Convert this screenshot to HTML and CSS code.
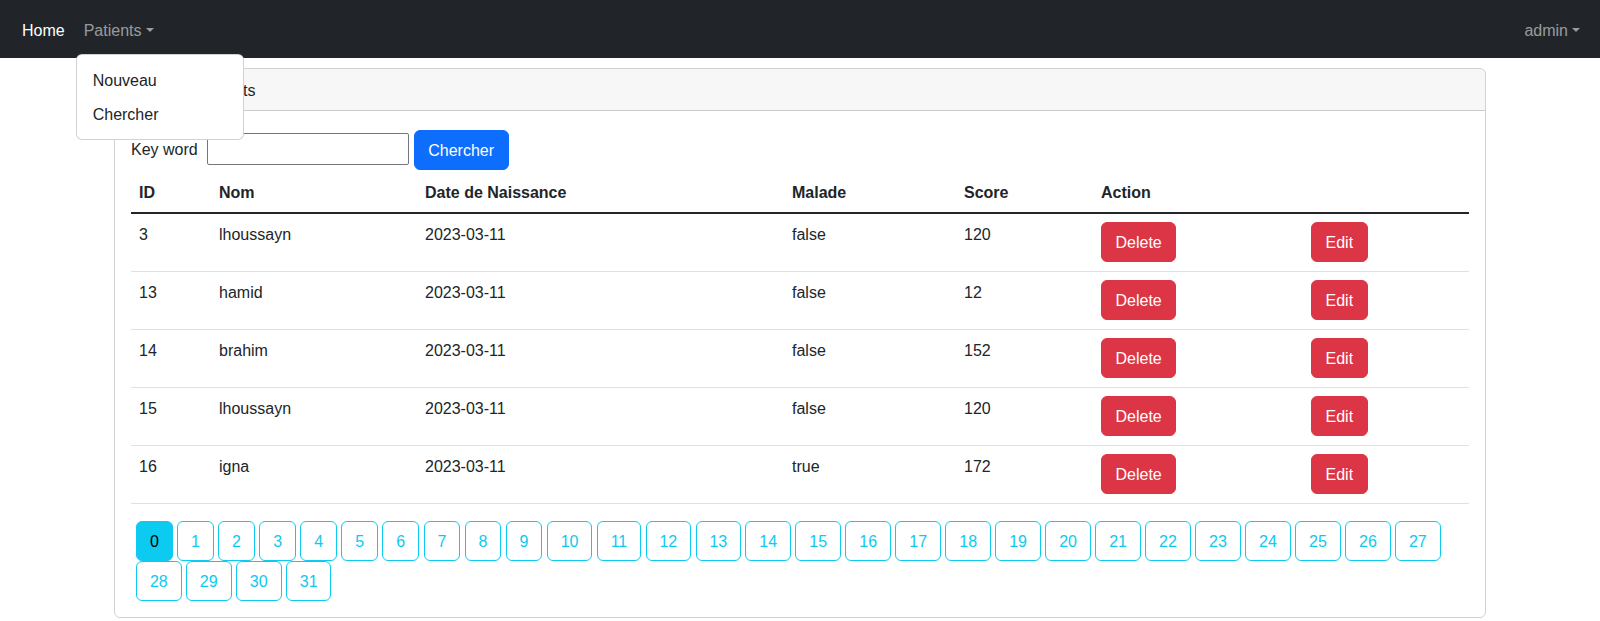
FILE: index.html
```html
<!DOCTYPE html>
<html lang="fr">
<head>
<meta charset="utf-8">
<title>Patients</title>
<link rel="stylesheet" href="styles.css">
</head>
<body>
<nav class="navbar">
  <ul class="nav nav-left">
    <li class="nav-item nav-home"><a class="nav-link active" href="#">Home</a></li>
    <li class="nav-item dropdown">
      <a class="nav-link dropdown-toggle" href="#">Patients</a>
      <ul class="dropdown-menu">
        <li><a class="dropdown-item" href="#">Nouveau</a></li>
        <li><a class="dropdown-item" href="#">Chercher</a></li>
      </ul>
    </li>
  </ul>
  <ul class="nav nav-right">
    <li class="nav-item"><a class="nav-link dropdown-toggle" href="#">admin</a></li>
  </ul>
</nav>

<main class="page">
  <div class="card">
    <div class="card-header">Liste des patients</div>
    <div class="card-body">
      <form class="search">
        <label class="search-label">Key word</label>
        <input class="search-input" type="text">
        <button class="btn btn-primary" type="button">Chercher</button>
      </form>

      <table class="table">
        <colgroup>
          <col class="c-id"><col class="c-nom"><col class="c-date"><col class="c-malade"><col class="c-score"><col class="c-action"><col class="c-edit">
        </colgroup>
        <thead>
          <tr><th>ID</th><th>Nom</th><th>Date de Naissance</th><th>Malade</th><th>Score</th><th>Action</th><th></th></tr>
        </thead>
        <tbody>
          <tr><td>3</td><td>lhoussayn</td><td>2023-03-11</td><td>false</td><td>120</td><td><a class="btn btn-danger" href="#">Delete</a></td><td><a class="btn btn-danger" href="#">Edit</a></td></tr>
          <tr><td>13</td><td>hamid</td><td>2023-03-11</td><td>false</td><td>12</td><td><a class="btn btn-danger" href="#">Delete</a></td><td><a class="btn btn-danger" href="#">Edit</a></td></tr>
          <tr><td>14</td><td>brahim</td><td>2023-03-11</td><td>false</td><td>152</td><td><a class="btn btn-danger" href="#">Delete</a></td><td><a class="btn btn-danger" href="#">Edit</a></td></tr>
          <tr><td>15</td><td>lhoussayn</td><td>2023-03-11</td><td>false</td><td>120</td><td><a class="btn btn-danger" href="#">Delete</a></td><td><a class="btn btn-danger" href="#">Edit</a></td></tr>
          <tr><td>16</td><td>igna</td><td>2023-03-11</td><td>true</td><td>172</td><td><a class="btn btn-danger" href="#">Delete</a></td><td><a class="btn btn-danger" href="#">Edit</a></td></tr>
        </tbody>
      </table>

      <ul class="pagination">
        <li><a class="page-btn active" href="#">0</a></li>
        <li><a class="page-btn" href="#">1</a></li>
        <li><a class="page-btn" href="#">2</a></li>
        <li><a class="page-btn" href="#">3</a></li>
        <li><a class="page-btn" href="#">4</a></li>
        <li><a class="page-btn" href="#">5</a></li>
        <li><a class="page-btn" href="#">6</a></li>
        <li><a class="page-btn" href="#">7</a></li>
        <li><a class="page-btn" href="#">8</a></li>
        <li><a class="page-btn" href="#">9</a></li>
        <li><a class="page-btn" href="#">10</a></li>
        <li><a class="page-btn" href="#">11</a></li>
        <li><a class="page-btn" href="#">12</a></li>
        <li><a class="page-btn" href="#">13</a></li>
        <li><a class="page-btn" href="#">14</a></li>
        <li><a class="page-btn" href="#">15</a></li>
        <li><a class="page-btn" href="#">16</a></li>
        <li><a class="page-btn" href="#">17</a></li>
        <li><a class="page-btn" href="#">18</a></li>
        <li><a class="page-btn" href="#">19</a></li>
        <li><a class="page-btn" href="#">20</a></li>
        <li><a class="page-btn" href="#">21</a></li>
        <li><a class="page-btn" href="#">22</a></li>
        <li><a class="page-btn" href="#">23</a></li>
        <li><a class="page-btn" href="#">24</a></li>
        <li><a class="page-btn" href="#">25</a></li>
        <li><a class="page-btn" href="#">26</a></li>
        <li><a class="page-btn" href="#">27</a></li>
        <li><a class="page-btn" href="#">28</a></li>
        <li><a class="page-btn" href="#">29</a></li>
        <li><a class="page-btn" href="#">30</a></li>
        <li><a class="page-btn" href="#">31</a></li>
      </ul>
    </div>
  </div>
</main>
</body>
</html>
```

FILE: styles.css
```css
* { box-sizing: border-box; }

html, body {
  margin: 0;
  padding: 0;
  background: #fff;
}

body {
  font-family: "Liberation Sans", Arial, sans-serif;
  font-size: 16px;
  line-height: 24px;
  color: #212529;
}

a { text-decoration: none; }

ul { list-style: none; margin: 0; padding: 0; }

/* ---------- navbar ---------- */
.navbar {
  height: 58px;
  background: #212529;
  display: flex;
  align-items: center;
  justify-content: space-between;
  padding: 0 12px 0 14px;
}

.nav {
  display: flex;
  align-items: center;
}

.nav-home { margin-right: 3px; }

.nav-link {
  display: block;
  padding: 10px 8px 6px;
  line-height: 24px;
  color: rgba(255, 255, 255, 0.55);
}

.nav-link.active { color: #fff; }

.dropdown-toggle::after {
  content: "";
  display: inline-block;
  margin-left: 4px;
  vertical-align: 4px;
  border-top: 4.8px solid;
  border-right: 4.8px solid transparent;
  border-left: 4.8px solid transparent;
  border-bottom: 0;
}

.dropdown { position: relative; }

.dropdown-menu {
  position: absolute;
  top: 45px;
  left: 0;
  z-index: 10;
  width: 168px;
  padding: 8px 0;
  background: #fff;
  border: 1px solid rgba(0, 0, 0, 0.175);
  border-radius: 6px;
}

.dropdown-item {
  display: block;
  padding: 6px 16px 4px;
  line-height: 24px;
  color: #212529;
  white-space: nowrap;
}

/* ---------- page / card ---------- */
.page {
  padding: 10px 114px 0;
}

.card {
  border: 1px solid rgba(0, 0, 0, 0.175);
  border-radius: 6px;
  overflow: hidden;
}

.card-header {
  padding: 10px 16px 7px;
  background: rgba(0, 0, 0, 0.03);
  border-bottom: 1px solid rgba(0, 0, 0, 0.175);
}

.card-body {
  padding: 16px;
}

/* ---------- search form ---------- */
.search {
  display: flex;
  align-items: center;
  height: 45px;
}

.search-label {
  margin-right: 9px;
  padding-top: 1px;
}

.search-input {
  width: 202px;
  height: 32px;
  margin-top: -1px;
  padding: 1px 2px;
  border: 1px solid #767676;
  border-radius: 2px;
  font: inherit;
  background: #fff;
}

.btn {
  display: inline-block;
  vertical-align: top;
  height: 40px;
  padding: 1px 13.5px 0;
  line-height: 37px;
  font-family: inherit;
  font-size: 16px;
  border: 1px solid transparent;
  border-radius: 6px;
  text-align: center;
  cursor: pointer;
}

.btn-primary {
  margin-left: 5px;
  background: #0d6efd;
  border-color: #0d6efd;
  color: #fff;
}

.btn-danger {
  background: #dc3545;
  border-color: #dc3545;
  color: #fff;
}

/* ---------- table ---------- */
.table {
  width: 100%;
  table-layout: fixed;
  border-collapse: collapse;
  margin-bottom: 17px;
}

.c-id { width: 80px; }
.c-nom { width: 206px; }
.c-date { width: 367px; }
.c-malade { width: 172px; }
.c-score { width: 137px; }
.c-action { width: 210px; }

.table th {
  padding: 9px 8px 7px;
  text-align: left;
  font-weight: bold;
  vertical-align: bottom;
  border-bottom: 2px solid #212529;
}

.table td {
  padding: 9px 8px 9px;
  vertical-align: top;
  border-bottom: 1px solid #dee2e6;
}

.table td .btn {
  margin-top: -1px;
}

/* ---------- pagination ---------- */
.pagination {
  display: flex;
  flex-wrap: wrap;
  column-gap: 4.4px;
  padding-left: 5px;
}

.page-btn {
  display: block;
  height: 40px;
  padding: 1px 12.9px 0;
  line-height: 37px;
  border: 1px solid #0dcaf0;
  border-radius: 6px;
  color: #0dcaf0;
}

.page-btn.active {
  background: #0dcaf0;
  color: #000;
}
```
